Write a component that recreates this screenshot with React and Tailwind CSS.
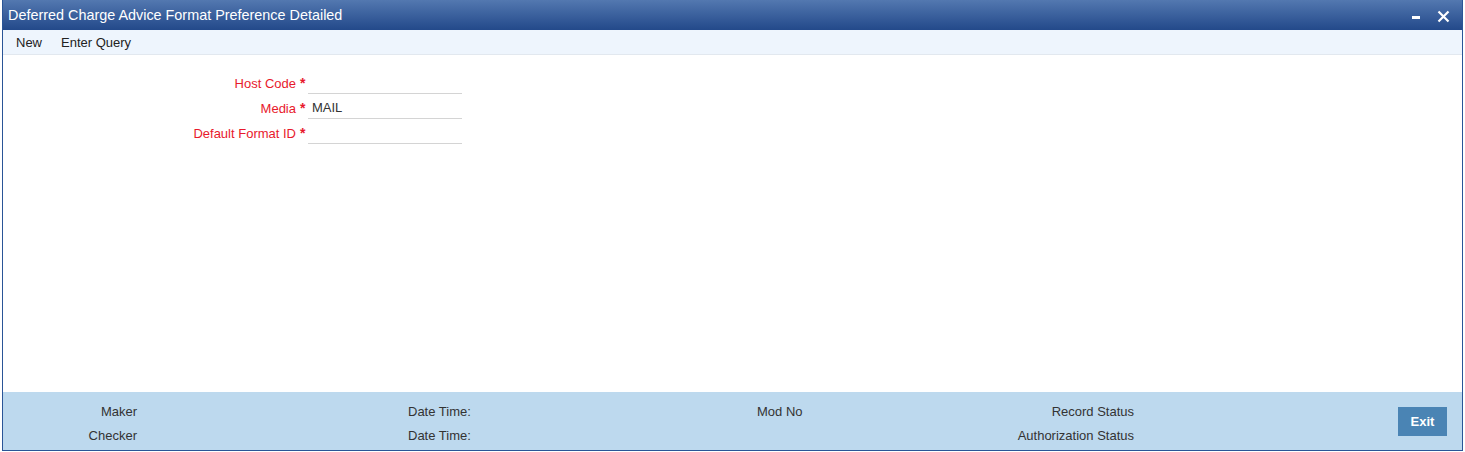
import React from 'react';

const font = { fontFamily: '"Liberation Sans", Arial, sans-serif' };

function Field({ label, value }) {
  return (
    <div className="flex items-end h-[25px]">
      <label className="w-[293px] text-right text-[13px] text-[#e8192c] leading-[20px]">{label}</label>
      <span className="w-[12px] pl-[4px] text-[14px] font-bold text-[#e8192c] leading-[20px] pb-[1px]">*</span>
      <div className="w-[154px] h-[25px] border-b border-[#d4d4d4] flex items-end pl-[4px] pb-[1px] text-[13px] text-[#333] leading-[18px]">
        {value}
      </div>
    </div>
  );
}

export default function App() {
  return (
    <div className="w-[1465px] h-[452px] bg-white" style={font}>
      <div className="ml-[2px] w-[1461px] h-[451px] flex flex-col border-x border-b border-[#2a5597]">
        {/* title bar */}
        <div className="h-[30px] flex items-center justify-between bg-gradient-to-b from-[#5378b0] to-[#23498a] pl-[5px] pr-[12px] pt-[2px]">
          <span className="text-white text-[14.4px]">Deferred Charge Advice Format Preference Detailed</span>
          <div className="flex items-center gap-[17px]">
            <span className="block w-[8px] h-[3px] bg-white mt-[3px]" />
            <svg width="13" height="13" viewBox="0 0 13 13">
              <path d="M1.5 1.5 L11.5 11.5 M11.5 1.5 L1.5 11.5" stroke="white" strokeWidth="2.2" />
            </svg>
          </div>
        </div>

        {/* menu */}
        <div className="h-[25px] bg-[#eef5fd] border-b border-[#e2e8ef] flex items-center pt-[2px] pl-[13px] gap-[19px] text-[13px] text-[#222]">
          <span>New</span>
          <span>Enter Query</span>
        </div>

        {/* form */}
        <div className="flex-1 pt-[14px]">
          <Field label="Host Code" value="" />
          <Field label="Media" value="MAIL" />
          <Field label="Default Format ID" value="" />
        </div>

        {/* footer */}
        <div className="h-[58px] bg-[#bdd9ee] flex items-start pt-[11px] text-[13px] text-[#333]">
          <div className="w-[134px] flex flex-col items-end gap-[7px]">
            <span className="leading-[17px]">Maker</span>
            <span className="leading-[17px]">Checker</span>
          </div>
          <div className="ml-[271px] w-[100px] flex flex-col gap-[7px]">
            <span className="leading-[17px]">Date Time:</span>
            <span className="leading-[17px]">Date Time:</span>
          </div>
          <div className="ml-[249px] w-[100px] flex flex-col gap-[7px]">
            <span className="leading-[17px]">Mod No</span>
            <span className="leading-[17px]">&nbsp;</span>
          </div>
          <div className="ml-[26px] w-[251px] flex flex-col items-end gap-[7px]">
            <span className="leading-[17px]">Record Status</span>
            <span className="leading-[17px]">Authorization Status</span>
          </div>
          <button className="ml-[264px] mt-[4px] w-[49px] h-[29px] bg-[#4a84b4] text-white text-[13px] font-bold">Exit</button>
        </div>
      </div>
    </div>
  );
}
